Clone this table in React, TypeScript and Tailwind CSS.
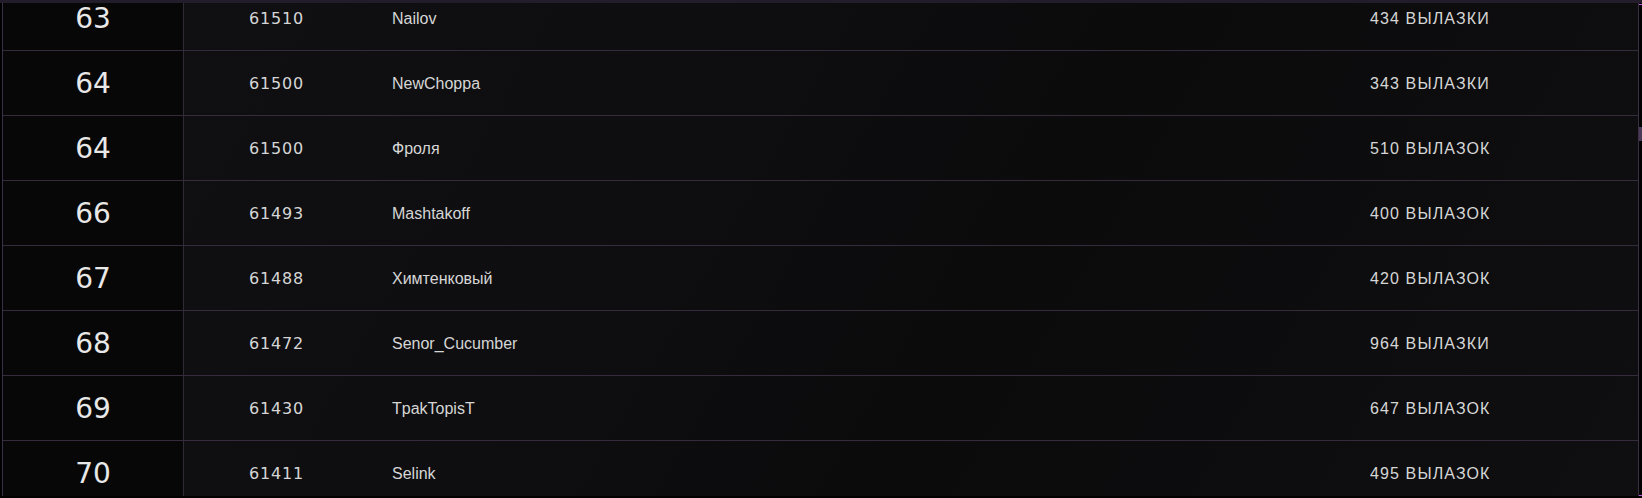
import React from 'react';

type Row = { rank: number; score: number; name: string; raids: string };

const rows: Row[] = [
  { rank: 63, score: 61510, name: 'Nailov', raids: '434 ВЫЛАЗКИ' },
  { rank: 64, score: 61500, name: 'NewChoppa', raids: '343 ВЫЛАЗКИ' },
  { rank: 64, score: 61500, name: 'Фроля', raids: '510 ВЫЛАЗОК' },
  { rank: 66, score: 61493, name: 'Mashtakoff', raids: '400 ВЫЛАЗОК' },
  { rank: 67, score: 61488, name: 'Химтенковый', raids: '420 ВЫЛАЗОК' },
  { rank: 68, score: 61472, name: 'Senor_Cucumber', raids: '964 ВЫЛАЗКИ' },
  { rank: 69, score: 61430, name: 'TpakTopisT', raids: '647 ВЫЛАЗОК' },
  { rank: 70, score: 61411, name: 'Selink', raids: '495 ВЫЛАЗОК' },
];

export default function App() {
  return (
    <div className="h-[498px] w-full bg-black flex flex-col overflow-hidden font-['Liberation_Sans',Arial,sans-serif]">
      {/* header edge */}
      <div className="h-[3px] bg-[#231c2a] shrink-0" />

      <div className="flex-1 flex pl-[2px] mb-[2px] min-h-0">
        {/* table */}
        <div className="flex-1 min-w-0 overflow-hidden border-l border-r border-[#3a2f45] bg-[#0f0f11] bg-[linear-gradient(120deg,#101013_0%,#0e0e10_40%,#0b0b0c_60%,#0f0f11_100%)]">
          <div className="-mt-[17px]">
            {rows.map((r, i) => (
              <div key={i} className="flex h-[65px] border-b border-[#342b3d]">
                <div className="w-[181px] shrink-0 pt-[2px] bg-[#070707] border-r border-[#2f2a36] flex items-center justify-center text-[28px] text-[#e8e8e8] font-['DejaVu_Sans',sans-serif]">
                  {r.rank}
                </div>
                <div className="w-[208px] shrink-0 pt-[2px] pl-[65px] flex items-center text-[16px] tracking-[0.05em] text-[#d6d6d6] font-['DejaVu_Sans',sans-serif]">
                  {r.score}
                </div>
                <div className="flex-1 pt-[2px] flex items-center text-[16px] text-[#d6d6d6]">
                  {r.name}
                </div>
                <div className="w-[268px] shrink-0 pt-[2px] flex items-center text-[16px] tracking-[0.07em] text-[#d6d6d6]">
                  {r.raids}
                </div>
              </div>
            ))}
          </div>
        </div>

        {/* scrollbar */}
        <div className="w-[3px] shrink-0 flex flex-col">
          <div className="h-[1px] mt-[1px] bg-[#c45ae0]" />
          <div className="h-[122px]" />
          <div className="h-[14px] bg-[#4a3a58]" />
          <div className="flex-1" />
          <div className="h-[1px] bg-[#c45ae0]" />
        </div>
      </div>
    </div>
  );
}
